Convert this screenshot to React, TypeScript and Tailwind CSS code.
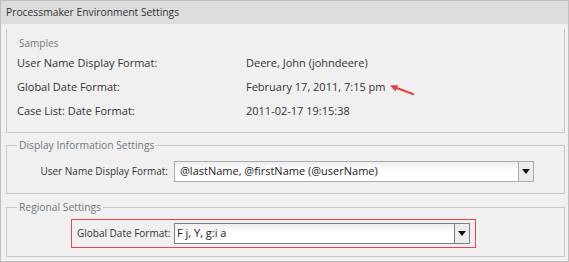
function Caret() {
  return (
    <svg width="8" height="5" viewBox="0 0 8 5" className="block">
      <path d="M0 0 H8 L4 5 Z" fill="#111" />
    </svg>
  );
}

function SelectBox({ value, width, dark }: { value: string; width: string; dark?: boolean }) {
  return (
    <div
      className={`flex h-[21px] ${width} border ${dark ? "border-[#7f7f7f]" : "border-[#ababab]"} bg-linear-to-b from-[#eeeeee] to-white to-50%`}
    >
      <div className={`flex flex-1 items-center ${dark ? "pl-[2px]" : "pl-[5px]"} text-[11px] text-[#222]`}>
        {value}
      </div>
      <div
        className={`flex w-[15px] items-center justify-center border-l ${dark ? "border-[#7f7f7f]" : "border-[#ababab]"} bg-[#ececec]`}
      >
        <Caret />
      </div>
    </div>
  );
}

function SampleRow({ label, value, children }: { label: string; value: string; children?: React.ReactNode }) {
  return (
    <div className="grid h-[24px] grid-cols-[229px_1fr] items-center">
      <span>{label}</span>
      <span className="flex items-center">
        {value}
        {children}
      </span>
    </div>
  );
}

export default function App() {
  return (
    <div className="w-[569px] h-[262px] border border-[#bfbfbf] bg-[#f0f0f0] font-['Open_Sans',sans-serif] text-[11px] text-[#333]">
      <div className="flex h-[23px] items-center bg-[#dcdcdc] pl-[5px] text-[10.3px] text-[#333]">
        Processmaker Environment Settings
      </div>

      <div className="pt-[5px] pb-[5px] pl-[5px] pr-[3px]">
        <div className="border-x border-b border-[#c8c8c8] pt-[6px] pb-[9px] pl-[10px]">
          <div className="h-[16px] leading-[16px] pl-[2px] text-[10px] text-[#707880]">Samples</div>
          <SampleRow label="User Name Display Format:" value="Deere, John (johndeere)" />
          <SampleRow label="Global Date Format:" value="February 17, 2011, 7:15 pm">
            <svg width="26" height="12" viewBox="0 0 26 12" className="ml-[4px] mt-[6px]">
              <path d="M24 10 L5 3" stroke="#e2453c" strokeWidth="2.2" strokeLinecap="round" />
              <path d="M1 1.5 L9 1 L6.5 7.5 Z" fill="#e2453c" />
            </svg>
          </SampleRow>
          <SampleRow label="Case List: Date Format:" value="2011-02-17 19:15:38" />
        </div>

        <fieldset className="mt-[4px] border border-[#c8c8c8] pt-[8px] pb-[11px]">
          <legend className="ml-[10px] px-[2px] h-[16px] leading-[16px] text-[10.3px] text-[#707880]">
            Display Information Settings
          </legend>
          <div className="flex items-center gap-[6px] text-[10px]">
            <span className="w-[161px] whitespace-nowrap text-right">User Name Display Format:</span>
            <SelectBox value="@lastName, @firstName (@userName)" width="w-[360px]" />
          </div>
        </fieldset>

        <fieldset className="mt-[5px] border border-[#c8c8c8] pt-[4px] pb-[8px]">
          <legend className="ml-[10px] px-[2px] h-[16px] leading-[16px] text-[10.3px] text-[#707880]">
            Regional Settings
          </legend>
          <div className="ml-[64px] flex w-fit items-center gap-[6px] border border-[#e5474b] py-[3px] pl-[5px] pr-[5px] text-[10px]">
            <span className="w-[91px] whitespace-nowrap text-right">Global Date Format:</span>
            <SelectBox value="F j, Y, g:i a" width="w-[296px]" dark />
          </div>
        </fieldset>
      </div>
    </div>
  );
}
